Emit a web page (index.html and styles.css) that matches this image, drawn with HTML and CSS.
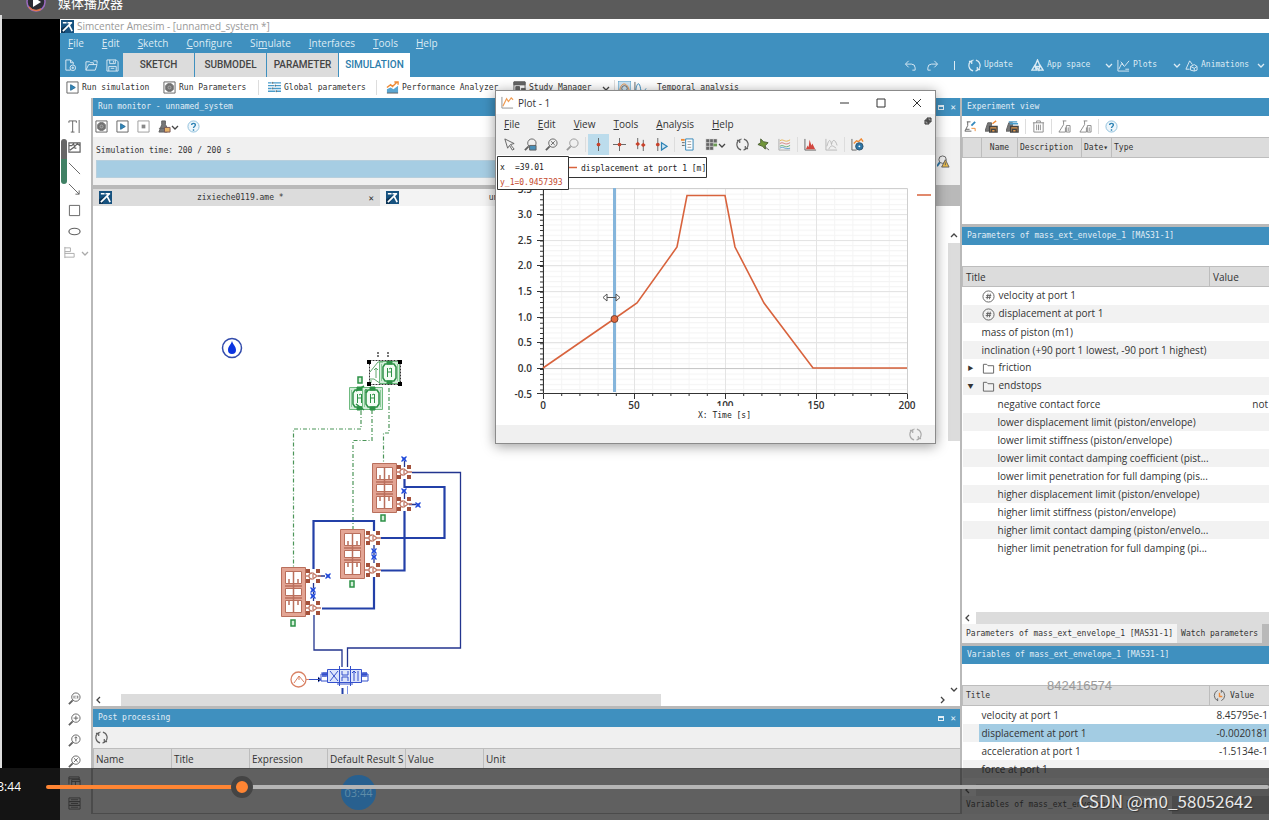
FILE: index.html
```html
<!DOCTYPE html>
<html lang="en">
<head>
  <meta charset="UTF-8">
  <meta name="viewport" content="width=device-width, initial-scale=1">
  <title>Simcenter Amesim - [unnamed_system *]</title>
  <link rel="stylesheet" href="styles.css">
</head>
<body>

<!-- icon sprite -->
<svg class="sprite" aria-hidden="true">
  <symbol id="i-logo" viewBox="0 0 14 14"><path fill="#17527f" d="M0 0h14v14H0z"/><path fill="#0d3557" d="M0 14V9l6-3-2 8z"/><path d="M2 12 11 3M2 3h4M7 3h5M9 6l3 6" stroke="#fff" stroke-width="1.800" fill="none"/></symbol>
  <symbol id="i-new" viewBox="0 0 14 14"><path d="M7 12H2V1h5l3 3v2M7 1v3h3" /><circle cx="9.500" cy="9.500" r="3"/><path d="M9.500 8v3M8 9.500h3"/></symbol>
  <symbol id="i-open" viewBox="0 0 14 14"><path d="M1 12V3h4l1 1h3v2M1 12l3-6h9l-2 6zM9 2h4v3"/></symbol>
  <symbol id="i-save" viewBox="0 0 14 14"><path d="M1 1h10l2 2v10H1zM4 1v4h6V1M3 13V8h8v5M5 10h4M8 2v2"/></symbol>
  <symbol id="i-undo" viewBox="0 0 14 14"><path d="M5 2 1.500 5.500 5 9M2 5.500h6a4 4 0 0 1 4 4V12H9"/></symbol>
  <symbol id="i-redo" viewBox="0 0 14 14"><path d="m9 2 3.500 3.500L9 9M12 5.500H6a4 4 0 0 0-4 4V12h3"/></symbol>
  <symbol id="i-sync" viewBox="0 0 14 14"><path stroke-width="1.300" d="M5.500 12.800A6 6 0 0 1 3 2.500M8.500 1.200A6 6 0 0 1 11 11.500M1 2.500h3V5.500M13 11.500h-3V8.500M3.500 2.200A6 6 0 0 1 6 1.100M10.500 11.800A6 6 0 0 1 8 12.900"/></symbol>
  <symbol id="i-app" viewBox="0 0 14 14"><path stroke-width="1.500" d="M7 1 4 8h6zM1 12l3-5 2 5zM8 12l2-5 3 5zM6 9l3 4"/></symbol>
  <symbol id="i-plots" viewBox="0 0 14 14"><path d="M1 1v12h12M2 11l3-6 3 3 5-6M4 3l3 3M9 11l4 0"/></symbol>
  <symbol id="i-anim" viewBox="0 0 14 14"><path d="M1 11 5 2l3 4M1 11h4M6 8l4-2 3 2v4l-3 1-4-1zM6 8l4 2 3-2M10 10v3"/></symbol>
  <symbol id="i-chev" viewBox="0 0 8 8"><path d="m1 3 3 3 3-3"/></symbol>
  <symbol id="i-run" viewBox="0 0 14 14"><path d="M1 1h12v12H1z"/><path fill="#3389bd" stroke="#276a94" d="m5 4 5 3-5 3z"/></symbol>
  <symbol id="i-gear" viewBox="0 0 14 14"><path d="M1 1h12v12H1z"/><path fill="#777" d="M5 3h4l2 2v4l-2 2H5L3 9V5z"/><circle cx="7" cy="7" r="1.500" stroke="#aaa"/></symbol>
  <symbol id="i-stop" viewBox="0 0 14 14"><path stroke="#999" d="M1 1h12v12H1z"/><path fill="#888" stroke="none" d="M5 5h4v4H5z"/></symbol>
  <symbol id="i-global" viewBox="0 0 14 14"><path stroke="#4a9cca" stroke-width="1.500" d="M0 2h4m1 0h9M0 5h7m1 0h6M0 8h4m1 0h9M0 11h8m1 0h5"/><path d="M5 1v2M8 4v2M5 7v2M9 10v2"/></symbol>
  <symbol id="i-perf" viewBox="0 0 14 14"><path fill="#5aa6d2" stroke="none" d="M1 9l4-2 3 2 5-4v8H1z"/><path stroke="#ef8a35" stroke-width="1.500" d="m1 7 4-3 2 2 5-5M9 1h4v3"/><path d="M1 13h12"/></symbol>
  <symbol id="i-study" viewBox="0 0 14 14"><path d="M1 1h12v12H1zM1 4h12"/><path fill="#666" d="M1 1h12v3H1zM3 6h4v5H3zM9 8h4v5H9z"/></symbol>
  <symbol id="i-temporal" viewBox="0 0 14 14"><path fill="#cfe5f3" stroke="#4a9cca" d="M0 0h14v14H0z"/><path stroke="#ef8a35" d="M2 10c1-9 8-9 10 0"/><circle cx="7" cy="8" r="3"/></symbol>
  <symbol id="i-freq" viewBox="0 0 14 14"><path d="M1 1v12h12"/><path stroke="#3389bd" d="M2 10c1-9 4-9 5-2s4 3 6 0"/></symbol>
  <symbol id="i-lab" viewBox="0 0 14 14"><path fill="#777" d="M4 1h4v4l3 5-1 3H1l3-8z"/><path d="M1 9h6"/><path fill="#e8b469" stroke="#755" d="M7 8h6v5H7z"/></symbol>
  <symbol id="i-labset" viewBox="0 0 14 14"><path fill="#777" d="M3 3h4v3l-3 6H0z"/><path fill="#e59a4c" stroke="#444" stroke-width="1.500" d="M5 7h8v6H5zM7 10h4v3H7z"/><path stroke="#ef8a35" stroke-width="1.500" d="m8 4 4-3"/></symbol>
  <symbol id="i-labsave" viewBox="0 0 14 14"><path fill="#777" d="M3 3h4v3l-3 6H0z"/><path fill="#e59a4c" stroke="#444" stroke-width="1.500" d="M5 7h8v6H5zM7 10h4v3H7z"/><path stroke="#4a9cca" stroke-width="1.500" d="M3 2h9M4 4h9"/></symbol>
  <symbol id="i-labnew" viewBox="0 0 14 14"><path d="M3 2h4M4 2v4l-3 6h7"/><path d="M2 10h4"/><path stroke="#3389bd" stroke-width="2" d="m8 6 4-4"/><path stroke="#ef8a35" d="M8 9h4v3"/></symbol>
  <symbol id="i-flask" viewBox="0 0 14 14"><path stroke="#888" d="M5 1h4M6 1v4l-5 8h7V8M9 6h4v7H9zM11 8v4"/></symbol>
  <symbol id="i-trash" viewBox="0 0 14 14"><path stroke="#888" d="M1 3h12M5 3V1h4v2M2 3v10h10V3M5 5v6M7 5v6M9 5v6"/></symbol>
  <symbol id="i-help" viewBox="0 0 14 14"><circle cx="7" cy="7" r="6" fill="#eef6fb" stroke="#8bbedb"/><path stroke="#2d83b5" stroke-width="1.500" d="M5 5.500C5 3 9 3 9 5.500 9 7 7 7 7 8.500M7 10v1.500"/></symbol>
  <symbol id="i-text" viewBox="0 0 14 14"><path d="M1 3V1h8v2M5 1v12M3 13h4M12 0v14"/></symbol>
  <symbol id="i-pic" viewBox="0 0 14 14"><path stroke-width="1.300" d="M1 2h12v10H1zM1 5h3l2-2 1 3 3-3 3 2M2 10l4-3 3 1"/></symbol>
  <symbol id="i-line" viewBox="0 0 14 14"><path d="m1 1 12 12"/></symbol>
  <symbol id="i-arrow" viewBox="0 0 14 14"><path d="m1 1 11 11M8 12h4V8"/></symbol>
  <symbol id="i-rect" viewBox="0 0 14 14"><path d="M1.500 1.500h11v11h-11z"/></symbol>
  <symbol id="i-ellipse" viewBox="0 0 14 14"><ellipse cx="7" cy="7" rx="6" ry="3.500" stroke-width="1.300"/></symbol>
  <symbol id="i-align" viewBox="0 0 14 14"><path stroke="#aaa" d="M2 1v12M2 2h6v4H2M2 8h10v4H2"/></symbol>
  <symbol id="i-zoom" viewBox="0 0 14 14"><circle cx="8.500" cy="5.500" r="4.500"/><path stroke-width="2" d="m5 9-4 4"/></symbol>
  <symbol id="i-zoom11" viewBox="0 0 14 14"><circle cx="8.500" cy="5.500" r="4.500"/><path stroke-width="2" d="m5 9-4 4"/><path d="M6.500 4v3M10.500 4v3M8.500 4v1M8.500 6v1"/></symbol>
  <symbol id="i-zoomin" viewBox="0 0 14 14"><circle cx="8.500" cy="5.500" r="4.500"/><path stroke-width="2" d="m5 9-4 4"/><path d="M8.500 3v5M6 5.500h5"/></symbol>
  <symbol id="i-zoomup" viewBox="0 0 14 14"><circle cx="8.500" cy="5.500" r="4.500"/><path stroke-width="2" d="m5 9-4 4"/><path d="M8.500 3v5M7 4.500l1.500-1.500L10 4.500"/></symbol>
  <symbol id="i-zoomx" viewBox="0 0 14 14"><circle cx="8.500" cy="5.500" r="4.500"/><path stroke-width="2" d="m5 9-4 4"/><path d="m6.500 3.500 4 4M10.500 3.500l-4 4"/></symbol>
  <symbol id="i-zoomfill" viewBox="0 0 14 14"><circle cx="8.500" cy="5.500" r="4.500"/><path stroke-width="2" d="m5 9-4 4"/><path fill="#4a8fb8" d="M6 8h7v5H6z"/></symbol>
  <symbol id="i-layers" viewBox="0 0 14 14"><path d="M1 9V1h11v3M1 3h11M4 4h9v8H4zM4 6h9M8 6v6"/></symbol>
  <symbol id="i-list" viewBox="0 0 14 14"><path d="M1 1h12v4H1zM1 5h12v4H1zM1 9h12v4H1zM3 3h8M3 7h8M3 11h8"/></symbol>
  <symbol id="i-pointer" viewBox="0 0 14 14"><path d="m2 1 10 5-4 1 4 5-2 1-3-5-2 3z"/></symbol>
  <symbol id="i-cur1" viewBox="0 0 14 14"><path d="M7 0v14"/><circle cx="7" cy="7" r="2" fill="#c8432c" stroke="none"/></symbol>
  <symbol id="i-cur2" viewBox="0 0 14 14"><path d="M7 0v14M0 7h14"/><circle cx="7" cy="7" r="2" fill="#c8432c" stroke="none"/></symbol>
  <symbol id="i-cur3" viewBox="0 0 14 14"><path d="M4 0v12M10 2v12"/><path fill="#c8432c" stroke="none" d="m4 4 2.500 2.500L4 9 1.500 6.500zM10 5l2.500 2.500L10 10 7.500 7.500z"/></symbol>
  <symbol id="i-cur4" viewBox="0 0 14 14"><path d="M3 0v14"/><circle cx="3" cy="7" r="2" fill="#c8432c" stroke="none"/><path stroke="#2d83b5" stroke-width="1.300" fill="#cfe5f3" d="m7 5 6 4-6 4z"/></symbol>
  <symbol id="i-legend" viewBox="0 0 14 14"><path stroke="#2d83b5" fill="#fff" d="M5 1h8v12H5z"/><path stroke="#999" d="M7 4h4M7 7h4M7 10h4"/><path d="M1 5h3M1 8h3"/><path stroke="#ef8a35" stroke-width="2" d="M0 2h4"/></symbol>
  <symbol id="i-grid" viewBox="0 0 14 14"><path fill="#666" stroke="#ddd" stroke-width=".5" d="M1 1h4v4H1zM5 1h4v4H5zM9 1h4v4H9zM1 5h4v4H1zM5 5h4v4H5zM1 9h4v4H1zM5 9h4v4H5z"/><path fill="#6d9b56" stroke="none" d="M9 6h4v3H9z"/></symbol>
  <symbol id="i-pin" viewBox="0 0 14 14"><path fill="#71963a" stroke="#4b5e33" d="m4 1 3 3 5 1-3 3v4L6 9 1 7l3-2z"/><path d="m8 9 5 4"/></symbol>
  <symbol id="i-curves" viewBox="0 0 14 14"><path stroke="#aaa" d="M1 1v12h12"/><path stroke="#e5b04a" d="M2 3c4-3 5 3 11-1"/><path stroke="#d17b79" d="M2 6c4-3 5 3 11-1"/><path stroke="#65ab72" d="M2 9c4-3 5 3 11-1"/><path stroke="#5b9fd0" d="M2 11c4-3 5 2 11 0"/></symbol>
  <symbol id="i-fft" viewBox="0 0 14 14"><path d="M1 1v12h12"/><path fill="#d2473f" stroke="none" d="m2 12 2-4 1 2 1-8 2 6 1-2 3 6z"/></symbol>
  <symbol id="i-wave" viewBox="0 0 14 14"><path stroke="#b5b5b5" d="M1 1v12h12M2 9c2-8 4-8 5-2 1-6 4-6 6 1M4 12c3-6 5-3 8-1"/></symbol>
  <symbol id="i-plot" viewBox="0 0 14 14"><path stroke="#8e8e8e" d="M1 1v12h12"/><path stroke="#ef9b52" stroke-width="1.300" d="m2 11 4-8 2 3 3-4 2 2"/></symbol>
  <symbol id="i-plotcfg" viewBox="0 0 14 14"><path d="M1 1v12h5"/><path stroke="#ef8a35" stroke-width="1.500" d="m3 6 3-3 2 1 3-3 2 3"/><circle cx="9" cy="9" r="4" fill="#2d75a6" stroke="#30536c"/><circle cx="9" cy="9" r="1" fill="#fff" stroke="none"/></symbol>
  <symbol id="i-clock" viewBox="0 0 14 14"><path d="M5 12.500A6 6 0 0 1 5 1.500M9 1.500a6 6 0 0 1 0 11M9 1v3M5 10v3"/><path stroke="#ef8a35" stroke-width="1.500" d="M7 4v4h3"/></symbol>
  <symbol id="i-hash" viewBox="0 0 14 14"><circle cx="7" cy="7" r="6"/><path d="m6.500 4-1 6M9 4l-1 6M4.500 6H10M4 8h5.500"/></symbol>
  <symbol id="i-folder" viewBox="0 0 14 14"><path d="M1.500 12V2.500H5L6.500 4h6v8z"/></symbol>
  <symbol id="i-warn" viewBox="0 0 14 14"><circle cx="6" cy="5" r="4"/><path stroke-width="2" stroke="#2d75a6" d="m3 8-3 4"/><path fill="#efc04b" d="m9 5 4 8H5z"/><path d="M9 8v3"/></symbol>
</svg>

<div class="player">
  <header class="player-top">
    <svg class="play-mark" viewBox="0 0 20 20"><circle cx="10" cy="10" r="9" fill="#2b2b33" stroke="#9b6bc0" stroke-width="1.500"/><path d="M3 15a9 9 0 0 0 12 2" fill="none" stroke="#e0764c" stroke-width="1.500"/><path fill="#fff" d="m7 5 8 5-8 5z"/></svg>
    <span class="player-title">媒体播放器</span>
  </header>

  <main class="app">
    <div class="titlebar">
      <svg class="icon"><use href="#i-logo"/></svg>
      <span>Simcenter Amesim - [unnamed_system *]</span>
    </div>

    <div class="ribbon">
      <nav class="menu">
        <a href="#"><u>F</u>ile</a><a href="#"><u>E</u>dit</a><a href="#"><u>S</u>ketch</a><a href="#"><u>C</u>onfigure</a><a href="#">Si<u>m</u>ulate</a><a href="#"><u>I</u>nterfaces</a><a href="#"><u>T</u>ools</a><a href="#"><u>H</u>elp</a>
      </nav>
      <div class="ribbon-row">
        <div class="quick">
          <button aria-label="New"><svg class="icon"><use href="#i-new"/></svg></button>
          <button aria-label="Open"><svg class="icon"><use href="#i-open"/></svg></button>
          <button aria-label="Save"><svg class="icon"><use href="#i-save"/></svg></button>
        </div>
        <div class="modes">
          <button>SKETCH</button>
          <button>SUBMODEL</button>
          <button>PARAMETER</button>
          <button class="active">SIMULATION</button>
        </div>
        <div class="actions">
          <button aria-label="Undo"><svg class="icon"><use href="#i-undo"/></svg></button>
          <button aria-label="Redo"><svg class="icon"><use href="#i-redo"/></svg></button>
          <i class="bar"></i>
          <button><svg class="icon"><use href="#i-sync"/></svg>Update</button>
          <button><svg class="icon"><use href="#i-app"/></svg>App space<svg class="chev"><use href="#i-chev"/></svg></button>
          <button><svg class="icon"><use href="#i-plots"/></svg>Plots<svg class="chev"><use href="#i-chev"/></svg></button>
          <button><svg class="icon"><use href="#i-anim"/></svg>Animations<svg class="chev"><use href="#i-chev"/></svg></button>
        </div>
      </div>
    </div>

    <div class="tools">
      <button><svg class="icon"><use href="#i-run"/></svg>Run simulation</button>
      <button><svg class="icon"><use href="#i-gear"/></svg>Run Parameters</button>
      <button class="split"><svg class="icon"><use href="#i-global"/></svg>Global parameters</button>
      <button class="split"><svg class="icon"><use href="#i-perf"/></svg>Performance Analyzer</button>
      <button><svg class="icon"><use href="#i-study"/></svg>Study Manager<svg class="chev"><use href="#i-chev"/></svg></button>
      <button class="split"><svg class="icon"><use href="#i-temporal"/></svg><svg class="icon"><use href="#i-freq"/></svg><span>Temporal analysis</span></button>
    </div>

    <div class="workspace">
      <aside class="strip">
        <div class="grip"></div>
        <div class="strip-group">
          <button aria-label="Text"><svg class="icon"><use href="#i-text"/></svg></button>
          <button aria-label="Image"><svg class="icon"><use href="#i-pic"/></svg></button>
          <button aria-label="Line"><svg class="icon"><use href="#i-line"/></svg></button>
          <button aria-label="Arrow"><svg class="icon"><use href="#i-arrow"/></svg></button>
          <button aria-label="Rectangle"><svg class="icon"><use href="#i-rect"/></svg></button>
          <button aria-label="Ellipse"><svg class="icon"><use href="#i-ellipse"/></svg></button>
          <button class="pair" aria-label="Align"><svg class="icon"><use href="#i-align"/></svg><svg class="chev faint"><use href="#i-chev"/></svg></button>
        </div>
        <div class="strip-group">
          <button aria-label="Zoom 1:1"><svg class="icon"><use href="#i-zoom11"/></svg></button>
          <button aria-label="Zoom in"><svg class="icon"><use href="#i-zoomin"/></svg></button>
          <button aria-label="Zoom up"><svg class="icon"><use href="#i-zoomup"/></svg></button>
          <button aria-label="Zoom reset"><svg class="icon"><use href="#i-zoomx"/></svg></button>
          <button aria-label="Layers"><svg class="icon"><use href="#i-layers"/></svg></button>
          <button aria-label="List"><svg class="icon"><use href="#i-list"/></svg></button>
        </div>
      </aside>

      <section class="center">
        <h2 class="dock-title">Run monitor - unnamed_system<span class="dock-btns"><i></i>✕</span></h2>
        <div class="dock-tools">
          <button aria-label="Run parameters"><svg class="icon"><use href="#i-gear"/></svg></button>
          <button aria-label="Start"><svg class="icon"><use href="#i-run"/></svg></button>
          <button aria-label="Stop"><svg class="icon"><use href="#i-stop"/></svg></button>
          <button class="wide" aria-label="Experiment"><svg class="icon"><use href="#i-lab"/></svg><svg class="chev"><use href="#i-chev"/></svg></button>
          <button aria-label="Help"><svg class="icon"><use href="#i-help"/></svg></button>
        </div>
        <div class="monitor">
          <div class="monitor-main">
            <p>Simulation time: 200 / 200 s</p>
            <div class="progress"></div>
          </div>
          <svg class="icon"><use href="#i-warn"/></svg>
        </div>
        <div class="doc-tabs">
          <button class="doc-tab"><svg class="icon"><use href="#i-logo"/></svg><span>zixieche0119.ame *</span><b>✕</b></button>
          <button class="doc-tab current"><svg class="icon"><use href="#i-logo"/></svg><span>unnamed_system *</span><b>✕</b></button>
        </div>
        <div class="sketch">
          <svg class="circuit" width="853" height="488" viewBox="93 206 853 488">
            <defs>
              <g id="cyl">
                <path fill="#e3a594" stroke="#b96f5c" d="M.5.5h24v49H.5z"/>
                <path fill="#fff" stroke="#b96f5c" d="M4.500 4.500h16v12h-16zM4.500 21.500h16v7h-16zM4.500 33.500h16v12h-16z"/>
                <path stroke="#b96f5c" stroke-width="1.500" d="M12.500 4v42M8 12v4M17 12v4M8 34v4M17 34v4M4 19h17M4 31h17"/>
              </g>
              <g id="node">
                <path fill="#a4523c" d="M-7-7h4v4h-4zM3-7h4v4H3zM-7 3h4v4h-4zM3 3h4v4H3z"/>
                <path fill="#fff" stroke="#c27a68" stroke-width="1.300" d="M-8 0h4M-1-3a3 3 0 1 0 0 6M0-3l4 3-4 3zM4 0h4"/>
              </g>
              <g id="plug"><path fill="#7f9cf0" d="M-2-2h4v4h-4z"/><path stroke="#2048d8" stroke-width="1.300" d="m-2.500-2.500 5 5M2.500-2.500l-5 5"/></g>
              <g id="port"><path fill="#d5efd9" stroke="#2d9147" stroke-width="1.500" d="M-2-3h4v6h-4z"/></g>
              <g id="mass" fill="none" stroke="#2c9146">
                <path stroke="#6fba80" fill="#d3eeda" d="M.5 1.500h20v22H.500z"/><path stroke="#8cc999" d="M2.500 4v17M18.500 4v17"/>
                <path fill="#f3fbf4" stroke-width="1.500" d="M6 4h9l2 3v11l-2 3H6l-2-3V7z"/>
                <path fill="#2c9146" d="M8 1h5v3H8zM8 21h5v3H8z"/>
                <path d="M8.500 8v9M8 12h5M12.500 8v9M10 9l2-1"/>
              </g>
            </defs>
            <circle cx="232" cy="348" r="9.500" fill="#fff" stroke="#324bab" stroke-width="1.500"/>
            <path fill="#0b34e0" d="M232 341c-1 4-4 5-4 9a4 4 0 0 0 8 0c0-4-3-5-4-9z"/>
            <g fill="none" stroke="#4b9558" stroke-width="1.200" stroke-dasharray="4 2 1 2">
              <path d="M361 411v18h-67.500v138M372 410v30.500h-19V529M389 388v45h-5.500v30"/>
            </g>
            <g fill="none" stroke="#23358f" stroke-width="1.300">
              <path d="M412 472.500h48.500V648H347.500v19M314 615v35h28v17M404.500 461v6M404.500 493v6M409 504.500h7M318 576h7M313.500 583v18M374 545v18"/>
            </g>
            <g fill="none" stroke="#2340a8" stroke-width="2.200">
              <path d="M404.500 479v8h40v51H381M404.500 511v59.500H381M313.500 569v-48H374v10M322 608.500h52V577"/>
            </g>
            <use href="#cyl" x="372" y="463"/><use href="#cyl" x="340" y="529"/><use href="#cyl" x="281" y="567"/>
            <use href="#node" x="404" y="472"/><use href="#node" x="404" y="504"/>
            <use href="#node" x="373" y="538"/><use href="#node" x="373" y="570"/>
            <use href="#node" x="313" y="576"/><use href="#node" x="313" y="608"/>
            <use href="#plug" x="404" y="459"/><use href="#plug" x="404" y="491"/><use href="#plug" x="418" y="505"/>
            <use href="#plug" x="328" y="576"/><use href="#plug" x="313" y="590"/><use href="#plug" x="313" y="596"/>
            <use href="#plug" x="374" y="551"/><use href="#plug" x="374" y="557"/>
            <use href="#port" x="383" y="518"/><use href="#port" x="352" y="584"/><use href="#port" x="293" y="623"/><use href="#port" x="360" y="380"/>
            <use href="#mass" x="349" y="386"/><use href="#mass" x="362" y="386"/><use href="#mass" x="379" y="360"/>
            <path fill="none" stroke="#2c9146" stroke-width="1.500" d="m356 391 8-5M356 404l8 6M366 389v4"/>
            <path fill="none" stroke="#62a86f" d="m370 372 8-10h5M370 379h4l7 5M376 368v10M374 370l2-2 2 2M371 380v3"/>
            <path stroke="#777" stroke-dasharray="2 1" stroke-width="2" d="M378 352v6M388 352v6"/>
            <path fill="none" stroke="#333" stroke-dasharray="2 1" d="M369.500 360.500h31v24h-31z"/>
            <path d="M367 360h4v4h-4zM398 360h4v4h-4zM367 382h4v4h-4zM398 382h4v4h-4z"/>
            <circle cx="298.500" cy="679.500" r="7.500" fill="#fff" stroke="#d98265" stroke-width="1.300"/>
            <path fill="none" stroke="#d98265" d="m294 683 5-7 5 6M299 676v4M306 679.500h5"/>
            <path stroke="#324fc7" d="M309 679.500h12M318 677l3 2.500-3 2.500"/>
            <path fill="#dce4fb" stroke="#3450cc" d="M327.500 669.500h34v13h-34z"/>
            <path fill="none" stroke="#3450cc" d="M339.500 666v20M350.500 666v20M330 671l8 10M338 671l-8 10M342 671v4h6v-4M342 681v-4h6v4M354 681v-10M358 671v10M352 673l2-2 2 2M327 681h-6v-7h6M322 672l1 5 1-5 1 5 1-5 1 5M361 681h7v-7h-7M362 672l1 5 1-5 1 5 1-5 1 5M337 684h16"/>
            <path fill="none" stroke="#2340a8" stroke-width="2" d="M342.500 688v6"/><path stroke="#7f95e6" d="M347.500 686v8"/>
          </svg>
          <div class="vscroll"><svg class="chev up"><use href="#i-chev"/></svg><i></i><svg class="chev"><use href="#i-chev"/></svg></div>
        </div>
        <div class="hscroll main-h"><svg class="chev left"><use href="#i-chev"/></svg><i></i><svg class="chev right"><use href="#i-chev"/></svg></div>

        <h2 class="dock-title">Post processing<span class="dock-btns"><i></i>✕</span></h2>
        <div class="post-tools"><button aria-label="Refresh"><svg class="icon"><use href="#i-sync"/></svg></button></div>
        <div class="post">
          <table class="grid post-grid">
            <colgroup><col><col><col><col><col><col class="rest"></colgroup>
            <thead><tr><th>Name</th><th>Title</th><th>Expression</th><th>Default Result S</th><th>Value</th><th>Unit</th></tr></thead>
          </table>
          <span class="bubble">03:44</span>
        </div>
      </section>

      <section class="side">
        <h2 class="dock-title">Experiment view</h2>
        <div class="dock-tools exp">
          <button aria-label="New experiment"><svg class="icon"><use href="#i-labnew"/></svg></button>
          <button aria-label="Save experiment"><svg class="icon"><use href="#i-labset"/></svg></button>
          <button aria-label="Save all"><svg class="icon"><use href="#i-labsave"/></svg></button>
          <i class="sep"></i>
          <button aria-label="Delete"><svg class="icon"><use href="#i-trash"/></svg></button>
          <i class="sep"></i>
          <button aria-label="Load"><svg class="icon"><use href="#i-flask"/></svg></button>
          <button aria-label="Export"><svg class="icon"><use href="#i-flask"/></svg></button>
          <i class="sep"></i>
          <button aria-label="Help"><svg class="icon"><use href="#i-help"/></svg></button>
        </div>
        <div class="exp-list">
          <table class="grid song">
            <colgroup><col class="c-mark"><col class="c-name"><col class="c-desc"><col class="c-date"><col></colgroup>
            <thead><tr><th></th><th>Name</th><th>Description</th><th>Date<small>▾</small></th><th>Type</th></tr></thead>
          </table>
        </div>

        <h2 class="dock-title">Parameters of mass_ext_envelope_1 [MAS31-1]</h2>
        <div class="spacer"></div>
        <div class="params">
          <table class="grid rows">
            <colgroup><col class="c-title"><col></colgroup>
            <thead><tr><th>Title</th><th>Value</th></tr></thead>
            <tbody>
              <tr><td class="l1"><svg class="icon"><use href="#i-hash"/></svg>velocity at port 1</td><td></td></tr>
              <tr><td class="l1"><svg class="icon"><use href="#i-hash"/></svg>displacement at port 1</td><td></td></tr>
              <tr><td class="l1">mass of piston (m1)</td><td></td></tr>
              <tr><td class="l1">inclination (+90 port 1 lowest, -90 port 1 highest)</td><td></td></tr>
              <tr><td class="l0"><b class="tri">▶</b><svg class="icon"><use href="#i-folder"/></svg>friction</td><td></td></tr>
              <tr><td class="l0"><b class="tri">▼</b><svg class="icon"><use href="#i-folder"/></svg>endstops</td><td></td></tr>
              <tr><td class="l2">negative contact force</td><td>not</td></tr>
              <tr><td class="l2">lower displacement limit (piston/envelope)</td><td></td></tr>
              <tr><td class="l2">lower limit stiffness (piston/envelope)</td><td></td></tr>
              <tr><td class="l2">lower limit contact damping coefficient (pist...</td><td></td></tr>
              <tr><td class="l2">lower limit penetration for full damping (pis...</td><td></td></tr>
              <tr><td class="l2">higher displacement limit (piston/envelope)</td><td></td></tr>
              <tr><td class="l2">higher limit stiffness (piston/envelope)</td><td></td></tr>
              <tr><td class="l2">higher limit contact damping (piston/envelo...</td><td></td></tr>
              <tr><td class="l2">higher limit penetration for full damping (pi...</td><td></td></tr>
            </tbody>
          </table>
        </div>
        <div class="hscroll"><svg class="chev left"><use href="#i-chev"/></svg><i></i></div>
        <div class="side-tabs"><button class="current">Parameters of mass_ext_envelope_1 [MAS31-1]</button><button>Watch parameters</button></div>

        <h2 class="dock-title">Variables of mass_ext_envelope_1 [MAS31-1]</h2>
        <div class="spacer"><span class="stamp">842416574</span></div>
        <div class="vars">
          <table class="grid rows">
            <colgroup><col class="c-title"><col></colgroup>
            <thead class="song"><tr><th>Title</th><th class="with-icon"><svg class="icon"><use href="#i-clock"/></svg>Value</th></tr></thead>
            <tbody>
              <tr><td class="l1">velocity at port 1</td><td>8.45795e-1</td></tr>
              <tr class="selected"><td class="l1">displacement at port 1</td><td>-0.0020181</td></tr>
              <tr><td class="l1">acceleration at port 1</td><td>-1.5134e-1</td></tr>
              <tr><td class="l1">force at port 1</td><td></td></tr>
            </tbody>
          </table>
        </div>
        <div class="hscroll"><svg class="chev left"><use href="#i-chev"/></svg><i></i></div>
        <div class="side-tabs"><button class="current">Variables of mass_ext_envelope_1 [MAS31-1]</button></div>
      </section>
    </div>
  </main>

  <!-- floating plot window -->
  <section class="plot">
    <div class="plot-title"><svg class="icon"><use href="#i-plot"/></svg><span>Plot - 1</span>
      <div class="win-btns">
        <button aria-label="Minimize"><svg viewBox="0 0 10 10"><path d="M0 5h9"/></svg></button>
        <button aria-label="Maximize"><svg viewBox="0 0 10 10"><path d="M1 1h8v8H1z"/></svg></button>
        <button aria-label="Close"><svg viewBox="0 0 10 10"><path d="m1 1 8 8M9 1 1 9"/></svg></button>
      </div>
    </div>
    <nav class="menu plot-menu">
      <a href="#"><u>F</u>ile</a><a href="#"><u>E</u>dit</a><a href="#"><u>V</u>iew</a><a href="#"><u>T</u>ools</a><a href="#"><u>A</u>nalysis</a><a href="#"><u>H</u>elp</a>
      <svg class="float" viewBox="0 0 8 8"><path d="M3 1h4v4H3zM1 3h4v4H1z"/></svg>
    </nav>
    <div class="plot-tools">
      <button aria-label="Select"><svg class="icon"><use href="#i-pointer"/></svg></button>
      <button aria-label="Zoom area"><svg class="icon"><use href="#i-zoomfill"/></svg></button>
      <button aria-label="Fit"><svg class="icon"><use href="#i-zoomx"/></svg></button>
      <button class="off" aria-label="Previous zoom"><svg class="icon"><use href="#i-zoom"/></svg></button>
      <i class="sep"></i>
      <button class="active" aria-label="Cursor"><svg class="icon"><use href="#i-cur1"/></svg></button>
      <button aria-label="Cross cursor"><svg class="icon"><use href="#i-cur2"/></svg></button>
      <button aria-label="Double cursor"><svg class="icon"><use href="#i-cur3"/></svg></button>
      <button aria-label="Play cursor"><svg class="icon"><use href="#i-cur4"/></svg></button>
      <i class="sep"></i>
      <button aria-label="Legend"><svg class="icon"><use href="#i-legend"/></svg></button>
      <button class="wide" aria-label="Layout"><svg class="icon"><use href="#i-grid"/></svg><svg class="chev"><use href="#i-chev"/></svg></button>
      <button aria-label="Refresh"><svg class="icon"><use href="#i-sync"/></svg></button>
      <button aria-label="Pin"><svg class="icon"><use href="#i-pin"/></svg></button>
      <button aria-label="Curves"><svg class="icon"><use href="#i-curves"/></svg></button>
      <i class="sep"></i>
      <button aria-label="FFT"><svg class="icon"><use href="#i-fft"/></svg></button>
      <button aria-label="Wave"><svg class="icon"><use href="#i-wave"/></svg></button>
      <i class="sep"></i>
      <button aria-label="Plot settings"><svg class="icon"><use href="#i-plotcfg"/></svg></button>
    </div>
    <svg class="chart" viewBox="496 155 439 270">
      <defs>
        <pattern id="minor" x="543" y="188.500" width="18.200" height="5.140" patternUnits="userSpaceOnUse"><path fill="none" stroke="#f4f4f4" d="M0 .5h18.200M.5 0v5.140"/></pattern>
      </defs>
      <path fill="url(#minor)" stroke="#cfcfcf" d="M543 188.500h364.500v205H543z"/>
      <path stroke="#e4e4e4" d="M543 214.500h364M543 240.500h364M543 265.500h364M543 291.500h364M543 317.500h364M543 342.500h364M634.500 189v204M725.500 189v204M816.500 189v204"/>
      <path stroke="#c8c8c8" d="M543 368.500h364"/>
      <g class="ticks">
        <path d="M543.500 188v205.500h364M537 214.500h6M537 240.500h6M537 265.500h6M537 291.500h6M537 317.500h6M537 342.500h6M537 368.500h6M537 393.500h6M543.500 394v5M634.500 394v5M725.500 394v5M816.500 394v5M907.500 394v5"/>
        <path stroke-width="3" stroke-dasharray="1 4.140" d="M541.500 189v204"/>
        <path stroke-width="2" stroke-dasharray="1 17.200" d="M543 395h364"/>
      </g>
      <g class="ylab">
        <text x="532" y="193">3.5</text><text x="532" y="218">3.0</text><text x="532" y="244">2.5</text><text x="532" y="269">2.0</text><text x="532" y="295">1.5</text><text x="532" y="321">1.0</text><text x="532" y="346">0.5</text><text x="532" y="372">0.0</text><text x="532" y="398">-0.5</text>
      </g>
      <g class="xlab"><text x="543" y="409">0</text><text x="634" y="409">50</text><text x="725" y="409">100</text><text x="816" y="409">150</text><text x="907" y="409">200</text></g>
      <path fill="#fff" d="M690 406h70v16h-70z"/>
      <text class="song-lab" x="698" y="418">X: Time [s]</text>
      <path fill="none" stroke="#85b5db" stroke-width="3" d="M614.500 188v204"/>
      <path fill="none" stroke="#d8633d" stroke-width="1.600" d="m543 368 71-49 23-16 40-56 10-51.500h38l10 51.500 29 56 49 65h94M917 195h14"/>
      <circle cx="614.500" cy="319" r="3.500" fill="#e2683d" stroke="#774433"/>
      <path fill="#fff" stroke="#555" d="M607 297.500h9M607 294l-4 3.500 4 3.500zM616 294l4 3.500-4 3.500z"/>
      <path fill="#fff" stroke="#333" d="M560.500 157.500h146v20h-146z"/>
      <path stroke="#d8633d" stroke-width="1.500" d="M569 167.500h8"/>
      <text class="song-lab" x="581" y="171">displacement at port 1 [m]</text>
      <path fill="#fff" stroke="#333" d="M497.500 156.500h71v33h-71z"/>
      <text class="song-lab" x="500" y="170">x</text><text class="song-lab" x="515" y="170">=39.01</text>
      <text class="song-lab red" x="500" y="185">y_1=0.9457393</text>
    </svg>
    <div class="plot-status"><svg class="icon"><use href="#i-sync"/></svg></div>
  </section>

  <footer class="controls">
    <label class="time" for="seek">03:44</label>
    <input type="range" id="seek" min="0" max="1000" value="154">
  </footer>
  <div class="watermark">CSDN @m0_58052642</div>
</div>

</body>
</html>
```
FILE: styles.css
```css
* {
  box-sizing: border-box;
}

:root {
  --blue: #3f90bf;
  --gray: #dcdcdc;
  --line: #b9b9b9;
  --song: "DejaVu Sans Mono", "Noto Sans CJK SC", monospace;
}

body {
  margin: 0;
  font-family: "Open Sans", "Noto Sans CJK SC", sans-serif;
  font-size: 10px;
  line-height: 14px;
  color: #333;
  background: #000;
}

.sprite {
  position: absolute;
  width: 0;
  height: 0;
}

svg {
  flex: none;
}

.icon {
  width: 13px;
  height: 13px;
  fill: none;
  stroke: #606060;
}

.chev {
  width: 8px;
  height: 8px;
  fill: none;
  stroke: #444;
  stroke-width: 1.3;
}

.chev.up { transform: rotate(180deg); }
.chev.left { transform: rotate(90deg); }
.chev.right { transform: rotate(-90deg); }
.chev.faint { stroke: #aaa; }

button {
  display: flex;
  align-items: center;
  border: 0;
  margin: 0;
  padding: 0;
  background: none;
  font: inherit;
  color: inherit;
  white-space: nowrap;
  cursor: pointer;
}

.player {
  position: relative;
  display: flex;
  flex-direction: column;
  height: 100vh;
  overflow: hidden;
}

.player-top {
  display: flex;
  align-items: flex-end;
  flex: none;
  height: 19px;
  padding: 0 26px 7px;
  gap: 12px;
  background: #5b5b5b;
}

.play-mark {
  width: 20px;
  height: 20px;
}

.player-title {
  font: 13px/18px "Noto Sans CJK SC", sans-serif;
  color: #fff;
}

/* application */
.app {
  display: flex;
  flex-direction: column;
  flex: 1;
  min-height: 0;
  margin-left: 2px;
  border-left: 58px solid #000;
  background: #fff;
}

.player::before {
  content: "";
  position: absolute;
  left: 0;
  top: 15px;
  bottom: 52px;
  width: 2px;
  background: #ddd;
}

.titlebar {
  display: flex;
  align-items: center;
  gap: 3px;
  height: 14px;
  flex: none;
  padding-left: 1px;
  color: #999;
}

.titlebar .icon, .doc-tab .icon {
  stroke: none;
}

.ribbon {
  flex: none;
  background: var(--blue);
  color: #dcebf4;
}

.ribbon .icon, .ribbon .chev {
  stroke: #dcebf4;
}

.menu {
  display: flex;
  align-items: center;
  gap: 18px;
  height: 20px;
  padding-left: 8px;
}

.menu a {
  color: inherit;
  text-decoration: none;
}

.ribbon-row {
  display: flex;
  height: 24px;
}

.quick {
  display: flex;
  gap: 8px;
  width: 63px;
  padding-left: 4px;
  flex: none;
}

.modes {
  display: flex;
  gap: 1px;
}

.modes button {
  width: 71px;
  justify-content: center;
  background: var(--gray);
  color: #444;
  font: 500 10px/14px Roboto, sans-serif;
}

.modes .active {
  background: #fff;
  color: #2a7cab;
}

.actions {
  display: grid;
  grid-template-columns: 22px 24px 18px 63px 86px 68px 84px;
  margin-left: auto;
}

.actions button, .tools button {
  gap: 3px;
  font: 8px/14px var(--song);
}

.actions .chev {
  margin: 0 4px 0 auto;
}

.tools .chev {
  margin: 0 8px 0 auto;
}

.bar {
  align-self: center;
  justify-self: start;
  width: 1px;
  height: 9px;
  margin-left: 4px;
  background: #dcebf4;
}

.tools {
  display: grid;
  grid-template-columns: 97px 105px 118px 127px 105px auto;
  flex: none;
  height: 21px;
  padding-left: 6px;
}

.split {
  position: relative;
}

.split::before {
  content: "";
  position: absolute;
  left: -10px;
  top: 3px;
  width: 1px;
  height: 15px;
  background: #ddd;
}

.tools .split:last-child::before {
  left: -4px;
}

.tools .split span {
  padding-left: 7px;
}

.workspace {
  display: flex;
  flex: 1;
  min-height: 0;
}

.strip {
  position: relative;
  display: flex;
  flex-direction: column;
  justify-content: space-between;
  flex: none;
  width: 31px;
  padding: 18px 0 6px;
}

.strip button {
  width: 31px;
  height: 21px;
  padding-left: 8px;
}

.strip .pair {
  gap: 5px;
  padding-left: 3px;
}

.grip {
  position: absolute;
  left: 1px;
  top: 41px;
  width: 6px;
  height: 45px;
  border-radius: 3px;
  background: linear-gradient(#666 45%, #3f8064 45%);
}

.center {
  display: flex;
  flex-direction: column;
  flex: 1;
  min-width: 0;
  border-left: 2px solid var(--line);
  border-bottom: 1px solid var(--line);
  margin-bottom: 6px;
}

.dock-title {
  display: flex;
  align-items: center;
  flex: none;
  height: 18px;
  margin: 0;
  padding-left: 5px;
  background: var(--blue);
  color: #e2eef6;
  font: 8px/14px var(--song);
}

.dock-btns {
  display: flex;
  align-items: center;
  gap: 7px;
  margin-left: auto;
  padding-right: 4px;
  font-size: 9px;
}

.dock-btns i {
  width: 6px;
  height: 5px;
  border: 1px solid #e2eef6;
  border-top-width: 2px;
}

.dock-tools {
  display: flex;
  align-items: center;
  flex: none;
  gap: 8px;
  height: 21px;
  padding-left: 2px;
}

.dock-tools .wide {
  gap: 0;
}

.monitor {
  display: flex;
  align-items: center;
  gap: 6px;
  flex: none;
  height: 48px;
  padding: 0 10px 0 3px;
  background: #f0f0f0;
}

.monitor-main {
  flex: 1;
  font: 8px/14px var(--song);
}

.monitor p {
  margin: 0 0 2px;
}

.progress {
  height: 18px;
  border: 1px solid #b7cfdd;
  background: #a6cde3;
}

.doc-tabs {
  display: flex;
  flex: none;
  height: 21px;
  border-top: 4px solid var(--line);
  background: var(--line);
}

.doc-tab {
  width: 287px;
  padding: 0 6px;
  background: var(--gray);
  font: 8px/14px var(--song);
}

.doc-tab.current {
  background: #f3f3f3;
}

.doc-tab span {
  flex: 1;
}

.doc-tab b {
  font-size: 9px;
  font-weight: 400;
}

.sketch {
  display: flex;
  flex: 1;
  min-height: 0;
  overflow: hidden;
}

.circuit {
  flex: 0 1 auto;
}

.vscroll {
  display: flex;
  flex-direction: column;
  align-items: center;
  width: 12px;
  margin-left: auto;
  padding: 26px 0 1px;
}

.vscroll i {
  width: 12px;
  height: 198px;
  margin: 3px 0 auto;
  background: var(--gray);
}

.hscroll {
  display: flex;
  align-items: center;
  gap: 4px;
  flex: none;
  height: 12px;
  padding-left: 2px;
}

.hscroll i {
  flex: 1;
  align-self: stretch;
  background: var(--gray);
}

.hscroll.main-h {
  height: 15px;
  border-bottom: 3px solid var(--line);
  padding-right: 14px;
}

.main-h i {
  flex: none;
  width: 540px;
  margin-left: 14px;
}

.main-h .right {
  margin-left: auto;
}

.post-tools {
  display: flex;
  flex: none;
  height: 21px;
  padding-left: 2px;
  background: #f0f0f0;
}

.post {
  position: relative;
  flex: none;
  height: 65px;
}

.bubble {
  position: absolute;
  z-index: 1;
  left: 248px;
  top: 27px;
  width: 35px;
  height: 35px;
  border-radius: 50%;
  background: #28608f;
  color: #5f8ca8;
  font-size: 11px;
  line-height: 35px;
  text-align: center;
}

/* tables */
.grid {
  width: 100%;
  border-collapse: collapse;
  table-layout: fixed;
}

.grid th {
  height: 20px;
  padding: 0 2px;
  border: 1px solid #bdbdbd;
  border-width: 1px 0 1px 1px;
  background: var(--gray);
  font-weight: 400;
  text-align: left;
  white-space: nowrap;
}

.rows th {
  padding: 0 3px;
}

.grid.song th, .song th {
  font: 8px/14px var(--song);
}

.grid th small {
  font-size: 8px;
}

.grid th.with-icon .icon {
  vertical-align: middle;
}

.grid td {
  height: 18px;
  padding: 0;
  overflow: hidden;
  white-space: nowrap;
}

.rows tr:nth-child(even) td {
  background: #f2f2f2;
}

.rows td:last-child {
  padding-right: 1px;
  text-align: right;
}

.rows .icon {
  margin-right: 4px;
  vertical-align: middle;
}

.grid td.l0 { padding-left: 5px; }
.grid td.l1 { padding-left: 19px; }
.grid td.l2 { padding-left: 35px; }

.tri {
  display: inline-block;
  width: 14px;
  font-size: 6px;
  vertical-align: middle;
}

.rows tr.selected td {
  background: #a3cce3;
}

.rows tr.selected td:first-child {
  background: linear-gradient(90deg, #f2f2f2 16px, #a3cce3 16px);
}

.post-grid col { width: 78px; }
.post-grid col.rest { width: auto; }
.c-mark { width: 19px; }
.c-name { width: 36px; }
.c-desc { width: 64px; }
.c-date { width: 30px; }
.c-title { width: 247px; }

.side {
  display: flex;
  flex-direction: column;
  flex: none;
  width: 309px;
  border-left: 2px solid var(--line);
  margin-bottom: 6px;
}

.exp .sep, .plot-tools .sep {
  width: 1px;
  height: 15px;
  background: #ddd;
}

.exp .sep {
  margin: 0 -2px;
}

.exp-list {
  flex: none;
  height: 90px;
  border-bottom: 3px solid var(--line);
}

.exp-list th:nth-child(2) {
  text-align: center;
}

.spacer {
  position: relative;
  flex: none;
  height: 21px;
}

.stamp {
  position: absolute;
  left: 85px;
  top: 13px;
  font: 13px/18px "Liberation Sans", sans-serif;
  color: #999;
}

.params {
  flex: 1;
  min-height: 0;
  overflow: hidden;
}

.vars {
  flex: none;
  height: 99px;
  overflow: hidden;
}

.side-tabs {
  display: flex;
  flex: none;
  height: 22px;
  border-bottom: 3px solid var(--line);
  background: var(--line);
}

.side-tabs:last-child {
  height: 18px;
  border: 0;
}

.side-tabs button {
  padding: 0 4px;
  background: var(--gray);
  font: 8px/14px var(--song);
}

.side-tabs .current {
  background: #f3f3f3;
}

/* plot window */
.plot {
  position: absolute;
  left: 495px;
  top: 90px;
  width: 441px;
  border: 1px solid #8b8b8b;
  background: #f0f0f0;
  box-shadow: 0 2px 12px rgba(0, 0, 0, 0.4);
}

.plot-title {
  display: flex;
  align-items: center;
  gap: 4px;
  height: 23px;
  padding-left: 5px;
  background: #fff;
}

.win-btns {
  display: flex;
  gap: 26px;
  margin-left: auto;
  padding-right: 13px;
}

.win-btns svg {
  width: 10px;
  height: 10px;
  fill: none;
  stroke: #333;
}

.float {
  width: 8px;
  height: 8px;
  margin: 0 3px 6px auto;
  fill: #999;
  stroke: #333;
}

.plot-tools {
  display: flex;
  align-items: center;
  height: 21px;
  padding-left: 3px;
}

.plot-tools button {
  width: 21px;
  height: 21px;
  justify-content: center;
}

.plot-tools .wide {
  width: 34px;
}

.plot-tools .sep {
  margin: 0 2px;
}

.plot-tools .active {
  background: #bcdcec;
}

.plot-tools .off {
  opacity: 0.6;
}

.chart {
  display: block;
  width: 100%;
  background: #fff;
}

.ticks path {
  fill: none;
  stroke: #333;
}

.ylab, .xlab {
  font-size: 10px;
  font-weight: 600;
  fill: #333;
}

.ylab { text-anchor: end; }
.xlab { text-anchor: middle; }

.song-lab {
  font-family: var(--song);
  font-size: 8px;
  fill: #222;
}

.song-lab.red {
  fill: #c4472c;
}

.plot-status {
  display: flex;
  align-items: center;
  justify-content: flex-end;
  height: 18px;
  padding-right: 13px;
}

.plot-status .icon {
  stroke: #aaa;
}

/* player overlay */
.controls {
  position: absolute;
  left: 0;
  right: 0;
  bottom: 0;
  display: flex;
  align-items: flex-start;
  gap: 25px;
  height: 52px;
  padding-top: 7px;
  background: rgba(28, 28, 28, 0.7);
}

.time {
  display: flex;
  justify-content: flex-end;
  flex: none;
  width: 21px;
  overflow: hidden;
  color: #fff;
  font-size: 12px;
  line-height: 24px;
}

#seek {
  position: relative;
  z-index: 2;
  flex: 1;
  height: 24px;
  margin: 0;
  background: none;
  appearance: none;
}

#seek::-webkit-slider-runnable-track {
  height: 4px;
  border-radius: 2px;
  background: linear-gradient(90deg, #ff8533 16%, #b5b5b5 16%);
}

#seek::-webkit-slider-thumb {
  appearance: none;
  width: 22px;
  height: 22px;
  margin-top: -9px;
  border: 5px solid #444;
  border-radius: 50%;
  background: #ff8533;
}

.watermark {
  position: absolute;
  right: 16px;
  bottom: 9px;
  color: #e8e8e8;
  font: 17px/20px "Noto Sans CJK SC", sans-serif;
  text-shadow: 1px 1px 1px #333;
}
```
